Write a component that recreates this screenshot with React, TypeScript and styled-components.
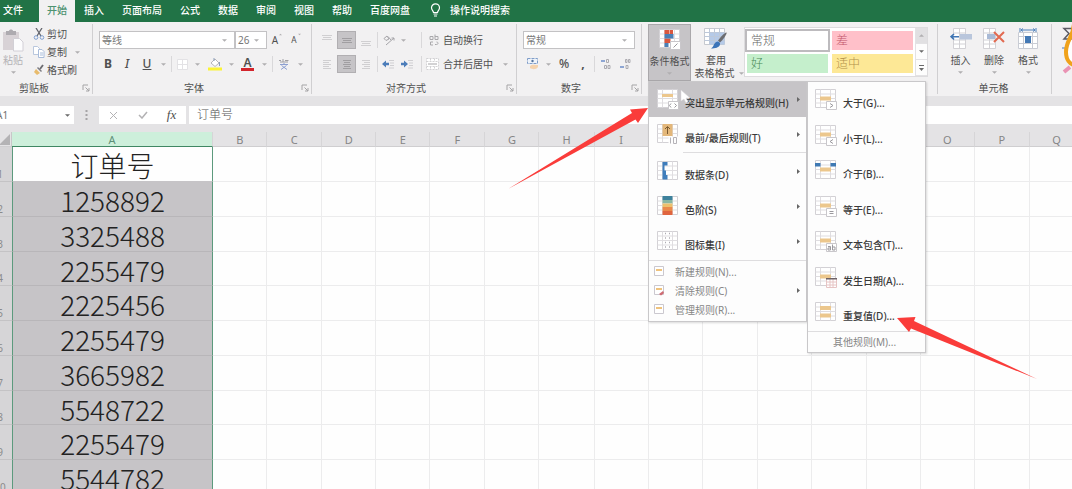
import React from 'react';
import styled, { createGlobalStyle, css } from 'styled-components';

const c = {
  green: '#217346',
  ribbon: '#f2f1f2',
  chrome: '#e4e3e5',
  pressed: '#c6c4c7',
  line: '#d0cfd1',
  text: '#505050',
};

const Global = createGlobalStyle`
  * { box-sizing: border-box; }
  body { margin: 0; background: #fefefe; }
  body, button, input, select {
    font-family: "Noto Sans", "Noto Sans CJK SC", sans-serif;
    font-size: 10px;
    line-height: 14px;
    color: ${c.text};
  }
  button { border: 0; padding: 0; background: none; }
  svg { display: block; flex: none; }
`;

const Page = styled.div`
  position: relative;
  height: 100vh;
  overflow: hidden;
  display: flex;
  flex-direction: column;
`;

/* ---------- tab strip ---------- */

const TabStrip = styled.nav`
  display: flex;
  height: 22px;
  flex: none;
  background: ${c.green};
`;

const Tab = styled.button<{ $active?: boolean; $file?: boolean }>`
  padding: 0 9px 3px;
  color: #fff;
  font-weight: 500;
  white-space: nowrap;
  ${p => p.$file && css`padding: 0 16px 3px 3px;`}
  ${p => p.$active && css`padding: 0 8px 3px; background: ${c.ribbon}; color: #4d9270;`}
`;

const TellMe = styled.button`
  display: flex;
  align-items: center;
  gap: 9px;
  margin-left: 11px;
  padding-bottom: 3px;
  color: #fff;
  font-weight: 500;
`;

/* ---------- ribbon ---------- */

const Ribbon = styled.div`
  display: flex;
  flex: none;
  height: 74px;
  background: ${c.ribbon};
`;

const Group = styled.section<{ $w?: number }>`
  display: flex;
  flex-direction: column;
  flex: ${p => (p.$w ? `0 0 ${p.$w}px` : '1 0 0')};
  min-width: 0;
  margin: 2px 0;
  border-right: ${p => (p.$w ? `1px solid ${c.line}` : '0')};
`;

const GroupBody = styled.div`
  flex: 1;
  display: flex;
  min-height: 0;
`;

const GroupFooter = styled.div<{ $shift?: number }>`
  display: flex;
  align-items: center;
  height: 12px;
  padding-right: 2px;
  text-align: center;
  span { flex: 1; padding-right: ${p => p.$shift || 0}px; line-height: 12px; }
`;

const LaunchButton = styled.button`
  width: 8px;
  height: 8px;
`;

const Rows = styled.div<{ $pad: number }>`
  flex: 1;
  display: flex;
  flex-direction: column;
  gap: 6px;
  padding: 7px 0 0 ${p => p.$pad}px;
`;

const ToolRow = styled.div`
  display: flex;
  align-items: center;
  height: 18px;
`;

const Tool = styled.button<{ $w: number; $on?: boolean }>`
  display: flex;
  align-items: center;
  justify-content: center;
  width: ${p => p.$w}px;
  height: 18px;
  white-space: nowrap;
  ${p => p.$on && css`background: ${c.pressed}; border: 1px solid #b1afb2;`}
`;

const SizeTool = styled(Tool)`
  align-items: flex-start;
  gap: 1px;
  padding-top: 2px;
`;

const LetterTool = styled(Tool)<{ $kind?: 'b' | 'i' | 'u' }>`
  font-size: 12px;
  font-weight: ${p => (p.$kind === 'b' ? 700 : 500)};
  font-style: ${p => (p.$kind === 'i' ? 'italic' : 'normal')};
  text-decoration: ${p => (p.$kind === 'u' ? 'underline' : 'none')};
`;

const FxButton = styled(Tool)`
  font-family: "Liberation Serif", serif;
  font-size: 13px;
  font-style: italic;
`;

const Divider = styled.i<{ $m?: number; $r?: number }>`
  width: 1px;
  height: 16px;
  margin: 0 ${p => p.$r ?? p.$m ?? 0}px 0 ${p => p.$m || 0}px;
  background: #d9d8da;
`;

const TextTool = styled.button`
  display: flex;
  align-items: center;
  gap: 4px;
  height: 18px;
  white-space: nowrap;
`;

const Combo = styled.label<{ $w: number }>`
  display: grid;
  grid-template-columns: 1fr 12px;
  align-items: center;
  width: ${p => p.$w}px;
  height: 18px;
  background: #fff;
  border: 1px solid #c3c2c4;
  & > select { grid-area: 1 / 1 / 2 / 3; }
  & > svg { grid-area: 1 / 2; pointer-events: none; }
`;

const Select = styled.select`
  appearance: none;
  width: 100%;
  height: 16px;
  padding: 0 2px;
  border: 0;
  background: transparent;
  color: #777;
`;

const Paste = styled.button`
  display: flex;
  flex-direction: column;
  align-items: center;
  width: 30px;
  padding: 5px 4px 0 0;
  color: #b5b3b6;
  svg + span { margin-top: 1px; }
  span + svg { margin-top: 4px; }
`;

const ClipActions = styled.div`
  display: flex;
  flex-direction: column;
  padding: 1px 0 0 3px;
  ${TextTool} { gap: 2px; }
`;

const BigButton = styled.button<{ $w: number; $on?: boolean }>`
  display: flex;
  flex-direction: column;
  align-items: center;
  width: ${p => p.$w}px;
  height: 57px;
  padding-top: 4px;
  line-height: 13px;
  white-space: nowrap;
  svg + span { margin-top: 4px; }
  span + svg { margin-top: 4px; }
  ${p => p.$on && css`background: ${c.pressed}; border: 1px solid #aaa8ab;`}
`;

const Inline = styled.span`
  display: flex;
  align-items: center;
  gap: 4px;
  padding-left: 6px;
`;

const StylesBody = styled(GroupBody)`
  padding-left: 6px;
  align-items: flex-start;
`;

const Gallery = styled.div`
  display: flex;
  margin: 3px 0 0 3px;
  background: #fff;
  border: 1px solid #dddcde;
`;

const Swatches = styled.div`
  display: grid;
  grid-template-columns: 85px 85px;
  grid-template-rows: 23px 23px;
  padding-top: 1px;
`;

const Swatch = styled.button<{ $bg: string; $fg: string; $sel?: boolean }>`
  margin: 2px;
  padding: 0 4px;
  text-align: left;
  font-size: 12px;
  font-weight: 300;
  background: ${p => p.$bg};
  color: ${p => p.$fg};
  ${p => p.$sel && css`margin: 0; border: 2px solid #bdbbbe;`}
`;

const GalleryScroll = styled.div`
  display: grid;
  grid-template-rows: repeat(3, 16px);
  width: 12px;
`;

const ScrollButton = styled.button<{ $off?: boolean }>`
  display: flex;
  align-items: center;
  justify-content: center;
  border-left: 1px solid #e3e2e4;
  border-bottom: 1px solid #e3e2e4;
  background: ${p => (p.$off ? '#e1e0e2' : '#fdfdfd')};
`;

/* ---------- conditional formatting menu ---------- */

const MenuAnchor = styled.div`
  position: relative;
`;

const Popup = styled.div`
  position: absolute;
  z-index: 5;
  top: 57px;
  left: 0;
  display: flex;
  align-items: flex-start;
`;

const Menu = styled.div<{ $w: number }>`
  width: ${p => p.$w}px;
  padding-bottom: 2px;
  background: #fdfdfd;
  border: 1px solid #c9c8ca;
  box-shadow: 1px 1px 2px rgba(0, 0, 0, 0.15);
`;

const MenuItem = styled.button<{ $on?: boolean }>`
  display: flex;
  align-items: center;
  width: 100%;
  height: 35px;
  padding: 0 6px 0 8px;
  gap: 6px;
  text-align: left;
  white-space: nowrap;
  font-weight: 500;
  color: #3a3a3a;
  background: ${p => (p.$on ? c.pressed : 'transparent')};
  span { flex: 1; padding-top: 6px; }
`;

const SmallItem = styled(MenuItem)`
  height: 19px;
  padding-left: 5px;
  gap: 10px;
  font-weight: 400;
  color: #868686;
  span { padding-top: 0; }
`;

const MoreItem = styled(SmallItem)`
  padding-left: 26px;
`;

const MenuRule = styled.hr<{ $inset?: boolean }>`
  height: 1px;
  margin: ${p => (p.$inset ? '0 0 1px 34px' : '1px 0')};
  border: 0;
  background: #dedddf;
`;

const Submenu = styled(Menu)`
  padding-bottom: 1px;
  ${MenuItem} { padding-left: 7px; gap: 6px; }
  ${MenuItem}:nth-child(odd) { height: 36px; }
  ${MoreItem}${MoreItem} { height: 19px; padding-left: 25px; }
  ${MenuRule} { margin: 0; }
`;

/* ---------- formula bar ---------- */

const FormulaBar = styled.div`
  display: flex;
  flex: none;
  height: 36px;
  padding: 10px 0 8px;
  background: ${c.chrome};
`;

const NameBox = styled.div`
  display: flex;
  align-items: center;
  width: 78px;
  margin-left: -4px;
  padding-right: 4px;
  background: #fff;
`;

const BarInput = styled.input`
  flex: 1;
  min-width: 0;
  border: 0;
  padding: 0;
  background: transparent;
  color: #707070;
`;

const Grip = styled.div`
  display: flex;
  align-items: center;
  justify-content: center;
  width: 25px;
`;

const EntryButtons = styled.div`
  display: flex;
  align-items: center;
  width: 87px;
  background: #fff;
`;

const FormulaInput = styled.input`
  flex: 1;
  min-width: 0;
  margin-left: 3px;
  padding: 0 8px;
  border: 0;
  background: #fff;
  font-size: 12px;
  font-weight: 300;
  color: #555;
`;

/* ---------- sheet ---------- */

const Sheet = styled.div`
  flex: 1;
  min-height: 0;
  overflow: hidden;
`;

const Grid = styled.table`
  width: calc(100% + 12px);
  min-width: 1096px;
  margin-left: -12px;
  border-collapse: separate;
  border-spacing: 0;
  table-layout: fixed;
`;

const ColHead = styled.th<{ $on?: boolean }>`
  height: 15px;
  padding: 1px 0 0;
  font-size: 11px;
  line-height: 13px;
  font-weight: 400;
  color: ${p => (p.$on ? '#5e8f78' : '#858585')};
  background: ${p => (p.$on ? '#cdefdb' : c.chrome)};
  border-right: 1px solid #d6d5d7;
  border-bottom: 1px solid ${p => (p.$on ? '#3f8763' : '#cfced0')};
`;

const Corner = styled(ColHead)`
  border-right-color: #c8c7c9;
  svg { margin-left: 11px; }
`;

const RowHead = styled.th`
  padding: 0 0 1px;
  vertical-align: bottom;
  text-align: center;
  font-weight: 400;
  line-height: 12px;
  color: #8b8b8b;
  background: #d6d5d7;
  border-bottom: 1px solid #c4c3c5;
`;

const Row = styled.tr`
  height: 35px;
  &:nth-child(4n) { height: 34px; }
`;

const Cell = styled.td`
  padding: 0;
  border-right: 1px solid #ececed;
  border-bottom: 1px solid #ececed;
`;

const KeyCell = styled.td<{ $head?: boolean }>`
  padding: 2px 0 0;
  text-align: center;
  font-family: "Noto Sans CJK SC", sans-serif;
  font-size: 28px;
  line-height: 30px;
  font-weight: 300;
  color: #222;
  background: ${p => (p.$head ? '#fefefe' : c.pressed)};
  border-left: 1px solid #5c9a7d;
  border-right: 1px solid #5c9a7d;
  border-bottom: 1px solid ${p => (p.$head ? c.pressed : '#b8b6b9')};
`;

const Annotations = styled.svg`
  position: absolute;
  z-index: 10;
  top: 0;
  left: 0;
  overflow: visible;
  pointer-events: none;
`;

/* ---------- icons ---------- */

const Caret = ({ up, dark, w = 5 }: { up?: boolean; dark?: boolean; w?: number }) => (
  <svg width={w} height="3" viewBox="0 0 6 3" aria-hidden="true">
    <path d={up ? 'M0 3 3 0 6 3Z' : 'M0 0h6L3 3Z'} fill={dark ? '#6a6a6a' : '#b0afb1'} />
  </svg>
);

const Launch = ({ label }: { label: string }) => (
  <LaunchButton aria-label={label}>
    <svg width="8" height="8" viewBox="0 0 8 8">
      <path d="M1 6V1h5M3.500 3.500 7 7M7 4v3H4" fill="none" stroke="#a5a4a6" />
    </svg>
  </LaunchButton>
);

const Sheetlet = ({ children, size = 22 }: { children?: React.ReactNode; size?: number }) => (
  <svg width={size} height={size} viewBox="0 0 22 22" aria-hidden="true">
    <path d="M.5.5h20v18H.5Z" fill="#fff" stroke="#d3d1d5" />
    <path d="M.5 5h20M.5 9.500h20M.5 14h20M5.500.5v18M15.500.5v18" stroke="#dfdde0" fill="none" />
    {children}
  </svg>
);

const Badge = ({ d }: { d: string }) => (
  <>
    <path d="M11.500 12.500h10v8h-10Z" fill="#fff" stroke="#c9c7cb" />
    <path d={d} fill="none" stroke="#9b999e" />
  </>
);

const orange = '#ecc78d';

const CondIcon = () => (
  <Sheetlet>
    <path d="M5.500 1h5v4h-5ZM5.500 9.500h6V14h-6Z" fill="#d9573f" />
    <path d="M5.500 5h9v4.500h-9Z" fill="#4b7fb5" />
    <path d="M5.500 14h4v4h-4Z" fill="#4b7fb5" />
    <path d="M11 1h3v4h-3Z" fill="#d9573f" />
    <Badge d="m14.500 18.500 4-4" />
  </Sheetlet>
);

const TableStyleIcon = () => (
  <svg width="24" height="22" viewBox="0 0 24 22" aria-hidden="true">
    <path d="M.5.500h20v16H.5Z" fill="#fff" stroke="#c6c9cf" />
    <path d="M5.500 4.500h15v12h-15Z" fill="#b5cae8" />
    <path d="M.5 4.500h20M.5 8.500h20M.5 12.500h20M5.500.5v16M10.500.5v16M15.500.5v16" stroke="#bcc8da" fill="none" />
    <path d="M22.500 4.500c1 1-4 8-6.500 10l-2-2c2-3 7.500-9 8.500-8Z" fill="#6c6c70" />
    <path d="M13.500 13.500c1.500 0 3 1.500 2.500 3-.5 3-5 4-9 4 3-1.500 2.500-6 6.500-7Z" fill="#3c74b8" />
  </svg>
);

const PasteIcon = () => (
  <svg width="22" height="23" viewBox="0 0 22 23" aria-hidden="true">
    <path d="M1 3h16v18H1Z" fill="#d8d2d6" />
    <path d="M4 2h3c0-2 4-2 4 0h3v4H4Z" fill="#aeabb0" />
    <path d="M11.500 9.500h6l3.500 3.500v9h-9.500Z" fill="#fcfcfd" stroke="#d2d0d6" />
  </svg>
);

const CutIcon = () => (
  <svg width="12" height="12" viewBox="0 0 12 12" aria-hidden="true">
    <path d="m3 0 5 8M9 0 4 8" stroke="#63656c" strokeWidth="1.300" fill="none" />
    <circle cx="3" cy="9.500" r="1.800" fill="none" stroke="#7f9fd0" />
    <circle cx="9" cy="9.500" r="1.800" fill="none" stroke="#7f9fd0" />
  </svg>
);

const CopyIcon = () => (
  <svg width="12" height="12" viewBox="0 0 12 12" aria-hidden="true">
    <path d="M.5.500h4l2 2v6h-6Z" fill="#fff" stroke="#b9c7dd" />
    <path d="M5.500 3.500h3.500l2 2v6H5.500ZM7 7h3M7 9h3" fill="#fff" stroke="#a9bcda" />
  </svg>
);

const BrushIcon = () => (
  <svg width="12" height="12" viewBox="0 0 12 12" aria-hidden="true">
    <path d="M3 5 7 9 4 11 1 8Z" fill="#e8bb6d" />
    <path d="m4 4 4 4 1-1-4-4Z" fill="#7d7d82" />
    <path d="m7 5 3-4" stroke="#6b6b70" strokeWidth="1.800" />
  </svg>
);

const BulbIcon = () => (
  <svg width="11" height="14" viewBox="0 0 11 14" aria-hidden="true">
    <path d="M3.500 9.500C3.500 8 1.500 7 1.500 4.800a4 4 0 0 1 8 0C9.500 7 7.500 8 7.500 9.500ZM3.500 11h4M4 13h3" fill="none" stroke="#fff" strokeWidth="1.200" />
  </svg>
);

const LinesIcon = ({ d, color = '#d0cfd1' }: { d: string; color?: string }) => (
  <svg width="10" height="13" viewBox="0 0 10 13" aria-hidden="true">
    <path d={d} stroke={color} fill="none" />
  </svg>
);

const BordersIcon = () => (
  <svg width="11" height="11" viewBox="0 0 11 11" aria-hidden="true">
    <path d="M.5.500h10v10H.5ZM5.500.5v10M.5 5.500h10" fill="#fff" stroke="#e3e2e5" />
  </svg>
);

const FillIcon = () => (
  <svg width="14" height="14" viewBox="0 0 14 14" aria-hidden="true">
    <path d="m3 6 4-4 4 4-4 3.500Z" fill="#fff" stroke="#b6b5b8" />
    <path d="M6 4V1M11.500 5v4" stroke="#8da0bd" />
    <path d="M0 10.500h14v3H0Z" fill="#fbf335" />
  </svg>
);

const ColorBar = styled.span`
  width: 13px;
  border-bottom: 3px solid #d3242c;
  font-size: 12px;
  line-height: 11px;
  font-weight: 600;
  text-align: center;
`;

const PhoneticIcon = () => (
  <svg width="10" height="12" viewBox="0 0 10 12" aria-hidden="true">
    <path d="M0 2.500h2M4 1v3M6 2.500h3.500M1 4h8" stroke="#a09fa4" fill="none" />
    <path d="M1 6.500h8M5 5v1M2.500 7.500 8 11.500M7.500 7.500 2 11.500" stroke="#8d9fd0" fill="none" />
  </svg>
);

const RotateIcon = () => (
  <svg width="12" height="12" viewBox="0 0 12 12" aria-hidden="true">
    <path d="M1 4.500 4 2l2 3-3 1.500ZM5 2.500 8 6M3 11 11 4M8.500 4H11v2.500" stroke="#a5a4a8" fill="none" />
  </svg>
);

const IndentIcon = ({ out }: { out?: boolean }) => (
  <svg width="12" height="11" viewBox="0 0 12 11" aria-hidden="true">
    <path d="M7 1.500h5M8 4h4M8 6.500h4M7 9h5" stroke="#d0cfd2" />
    <path d={out ? 'M0 5 4 1.500v2.300h3v2.400H4v2.300Z' : 'M7 5 3 1.500v2.300H0v2.400h3v2.300Z'} fill="#4c7dba" />
  </svg>
);

const WrapIcon = () => (
  <svg width="10" height="12" viewBox="0 0 10 12" aria-hidden="true">
    <path d="M1 2.500h3v3H1ZM6 .5v5h3v-3H6M4 8H1.500v3H4M6 10.500h1.500c2 0 2-2.500 0-2.500" stroke="#a9a8ab" fill="none" />
  </svg>
);

const MergeIcon = () => (
  <svg width="13" height="12" viewBox="0 0 13 12" aria-hidden="true">
    <path d="M.5.500h12v11H.5ZM.5 3.500h12M.5 8.500h12M4.500.5v3M8.500.5v3M4.500 8.500v3M8.500 8.500v3" fill="#fff" stroke="#d3d2d4" strokeDasharray="2 1" />
    <path d="M2 6h9" stroke="#a6a5a8" />
  </svg>
);

const CurrencyIcon = () => (
  <svg width="12" height="12" viewBox="0 0 12 12" aria-hidden="true">
    <path d="M.5.500h10v5H.5Z" fill="#eef3fa" stroke="#7f9dc9" strokeDasharray="3 1" />
    <circle cx="5.500" cy="3" r="1.200" fill="#55759f" />
    <path d="M3 8c2-2 6-1 8-1v2c-2 3-6 2.500-8 1Z" fill="#f5d3ae" />
  </svg>
);

const DecimalIcon = ({ less }: { less?: boolean }) => (
  <svg width="11" height="12" viewBox="0 0 11 12" aria-hidden="true">
    <path d={less ? 'M5.500 1.500h1.500v3H5.500ZM8.500 1.500h1.500v3H8.500ZM6 7.500h2v3H6Z' : 'M5.500 1.500h2v3h-2ZM3.500 7.500h2v3h-2ZM7 7.500h2v3H7Z'} stroke="#acabb0" fill="none" />
    <path d={less ? 'M0 9h4' : 'M0 3h4'} stroke="#6c8cc9" strokeWidth="1.500" />
  </svg>
);

const InsertIcon = () => (
  <svg width="22" height="22" viewBox="0 0 22 22" aria-hidden="true">
    <path d="M3.500.5h12v20h-12ZM3.500 5h12M3.500 12h12M3.500 16h12M9.500.5v20" fill="#fff" stroke="#d2d1d5" />
    <path d="M10 6h12v5.500H10Z" fill="#b9c6dc" />
    <path d="M1 8.700h8M4 6 1 8.700 4 11.500" stroke="#3f75b4" strokeWidth="1.600" fill="none" />
  </svg>
);

const DeleteIcon = () => (
  <svg width="22" height="22" viewBox="0 0 22 22" aria-hidden="true">
    <path d="M.5.500h12v20H.5ZM.5 5h12M.5 12h12M.5 16h12M6.500.5v20" fill="#fff" stroke="#d2d1d5" />
    <path d="M4 6h8v5H4Z" fill="#a9bad6" />
    <path d="m11 4 10 10M21 4 11 14" stroke="#e26a50" strokeWidth="2" />
  </svg>
);

const FormatIcon = () => (
  <svg width="20" height="22" viewBox="0 0 20 22" aria-hidden="true">
    <path d="M.5 4.500h19v16H.5ZM.5 8.500h19M.5 15.500h19M5.500 4.500v16M14.500 4.500v16" fill="#fff" stroke="#c9ccd4" />
    <path d="M7 8h6v7H7Z" fill="#4479b5" />
    <path d="M3 2h14M5 .5 3 2l2 1.500M15 .5 17 2l-2 1.500M2 0v4M18 0v4" stroke="#4d80bb" fill="none" />
  </svg>
);

const EditingArt = () => (
  <svg width="12" height="70" viewBox="1060 24 12 70" aria-hidden="true">
    <path d="M1073 28.500h-9l5 5-5 5.500h9" fill="none" stroke="#5b5b66" strokeWidth="1.500" />
    <path d="M1062 48h4" stroke="#7fa0cf" strokeWidth="1.500" />
    <path d="m1064 72 6-5" stroke="#ea93b4" strokeWidth="4" />
    <path d="M1074 38c-10 5-11 22 0 27Z" fill="#fff" />
    <path d="M1074 24c-1 14-8 16-8 28 0 8 4 12 8 13" fill="none" stroke="#f0a21b" strokeWidth="4" />
  </svg>
);

const TopBottomIcon = () => (
  <Sheetlet>
    <path d="M5.500 0h10v12h-10Z" fill="#e3b77a" />
    <path d="M10.500 10V3M8 5l2.500-2.500L13 5" stroke="#7a5a30" fill="none" />
    <path d="M11.500 12.500h10v8h-10Z" fill="#fdfdfd" />
    <path d="M13.500 13.500v6M16.500 13.500h3v6h-3Z" fill="none" stroke="#b5b3b8" />
  </Sheetlet>
);

const BarsIcon = () => (
  <Sheetlet>
    <path d="M5.500 1h5v3.500h-5ZM5.500 4.500h2v5h-2ZM5.500 9.500h3.500V14H5.500ZM5.500 14h5v4.500h-5Z" fill="#3f7dbb" />
  </Sheetlet>
);

const ScaleIcon = () => (
  <Sheetlet>
    <path d="M5.500 0h10v4h-10Z" fill="#3e829c" />
    <path d="M5.500 4h10v3.500h-10Z" fill="#89b6a2" />
    <path d="M5.500 7.500h10V11h-10Z" fill="#edc06c" />
    <path d="M5.500 11h10v4h-10Z" fill="#ea8a4a" />
    <path d="M5.500 15h10v4h-10Z" fill="#e0653f" />
  </Sheetlet>
);

const SetIcon = () => (
  <Sheetlet>
    <path d="M8 2.500h1M12 2.500h1M8 7h1M12 7h1M8 11.500h1M12 11.500h1M8 16h1M12 16h1" stroke="#aeacb2" strokeWidth="1.500" />
  </Sheetlet>
);

const MiniRuleIcon = ({ clear }: { clear?: boolean }) => (
  <svg width="11" height="11" viewBox="0 0 11 11" aria-hidden="true">
    <path d="M.5.500h9v9h-9Z" fill="#fff" stroke="#cbc8cf" />
    <path d="M2 3h6v2H2Z" fill="#efc27c" />
    {clear && <path d="m5 9 4-3 1 2-3 2.500Z" fill="#cf6a72" />}
  </svg>
);

const SubIcon = ({ kind }: { kind: string }) => {
  const badges: Record<string, string> = {
    gt: 'm15 14.500 3 2-3 2',
    lt: 'm18 14.500-3 2 3 2',
    eq: 'M14.500 15.500h4M14.500 17.500h4',
    text: 'M13 15.500h2.500v3.500H13v-2h2.500M17.500 13.500V19H20v-3h-2.500',
  };
  return (
    <Sheetlet>
      {kind === 'dup' ? (
        <path d="M5 4h11v4H5ZM5 11.500h11v4H5Z" fill={orange} />
      ) : (
        <path d="M5 7.500h11v4H5Z" fill={orange} />
      )}
      {kind === 'between' && <path d="M0 3h5.500v3.500H0ZM15.500 3H21v3.500h-5.500Z" fill="#3f79b3" />}
      {kind === 'date' && (
        <>
          <path d="M11.500 11.500h10v9h-10ZM11.500 15h10M11.500 18h10M15 12v9M18 12v9" fill="#fff" stroke="#e6c4c4" />
          <path d="M11 11h11v1.500H11Z" fill="#6d6267" />
        </>
      )}
      {badges[kind] && <Badge d={badges[kind]} />}
    </Sheetlet>
  );
};

const HighlightIcon = () => (
  <Sheetlet>
    <path d="M5 5h11v3H5Z" fill={orange} />
    <Badge d="m14 14.500-1.500 2 1.500 2M17.500 14.500l2 2-2 2" />
  </Sheetlet>
);

const MenuArrow = () => (
  <svg width="3" height="5" viewBox="0 0 3 5" aria-hidden="true">
    <path d="M0 0v5l3-2.500Z" fill="#666" />
  </svg>
);

/* ---------- data ---------- */

const tabs = ['文件', '开始', '插入', '页面布局', '公式', '数据', '审阅', '视图', '帮助', '百度网盘'];

const rules = [
  { label: '突出显示单元格规则(H)', icon: <HighlightIcon />, on: true },
  { label: '最前/最后规则(T)', icon: <TopBottomIcon />, rule: true },
  { label: '数据条(D)', icon: <BarsIcon /> },
  { label: '色阶(S)', icon: <ScaleIcon /> },
  { label: '图标集(I)', icon: <SetIcon /> },
];

const highlight = [
  ['gt', '大于(G)...'],
  ['lt', '小于(L)...'],
  ['between', '介于(B)...'],
  ['eq', '等于(E)...'],
  ['text', '文本包含(T)...'],
  ['date', '发生日期(A)...'],
  ['dup', '重复值(D)...'],
];

const columns = 'BCDEFGHIJKLMNOPQ'.split('');
const orders = ['订单号', '1258892', '3325488', '2255479', '2225456', '2255479', '3665982', '5548722', '2255479', '5544782'];

/* ---------- ribbon groups ---------- */

const ClipboardGroup = () => (
  <Group $w={93}>
    <GroupBody>
      <Paste>
        <PasteIcon />
        <span>粘贴</span>
        <Caret />
      </Paste>
      <ClipActions>
        <TextTool><CutIcon /><span>剪切</span></TextTool>
        <TextTool><CopyIcon /><span>复制</span><Inline><Caret /></Inline></TextTool>
        <TextTool><BrushIcon /><span>格式刷</span></TextTool>
      </ClipActions>
    </GroupBody>
    <GroupFooter $shift={14}><span>剪贴板</span><Launch label="剪贴板选项" /></GroupFooter>
  </Group>
);

const FontGroup = () => (
  <Group $w={219}>
    <GroupBody>
      <Rows $pad={6}>
        <ToolRow>
          <Combo $w={136}><Select aria-label="字体"><option>等线</option></Select><Caret /></Combo>
          <Combo $w={32}><Select aria-label="字号"><option>26</option></Select><Caret /></Combo>
          <SizeTool $w={20} aria-label="增大字号">A<Caret up w={3} /></SizeTool>
          <SizeTool $w={18} aria-label="减小字号"><small>A</small><Caret w={3} /></SizeTool>
        </ToolRow>
        <ToolRow>
          <LetterTool $w={18} $kind="b">B</LetterTool>
          <LetterTool $w={20} $kind="i">I</LetterTool>
          <LetterTool $w={20} $kind="u">U</LetterTool>
          <Tool $w={12} aria-label="下划线选项"><Caret /></Tool>
          <Divider $m={2} />
          <Tool $w={16} aria-label="边框"><BordersIcon /></Tool>
          <Tool $w={15} aria-label="边框选项"><Caret /></Tool>
          <Tool $w={20} aria-label="填充颜色"><FillIcon /></Tool>
          <Tool $w={13} aria-label="填充颜色选项"><Caret /></Tool>
          <Tool $w={19} aria-label="字体颜色"><ColorBar>A</ColorBar></Tool>
          <Tool $w={14} aria-label="字体颜色选项"><Caret /></Tool>
          <Divider $m={1} />
          <Tool $w={20} aria-label="拼音"><PhoneticIcon /></Tool>
          <Tool $w={12} aria-label="拼音选项"><Caret /></Tool>
        </ToolRow>
      </Rows>
    </GroupBody>
    <GroupFooter $shift={6}><span>字体</span><Launch label="字体设置" /></GroupFooter>
  </Group>
);

const AlignGroup = () => (
  <Group $w={205}>
    <GroupBody>
      <Rows $pad={5}>
        <ToolRow>
          <Tool $w={20} aria-label="顶端对齐"><LinesIcon d="M0 1.500h10M1 3.500h8M0 5.500h10" /></Tool>
          <Tool $w={19} $on aria-label="垂直居中"><LinesIcon d="M0 4.500h10M1 6.500h8M0 8.500h10" color="#a09ea1" /></Tool>
          <Tool $w={20} aria-label="底端对齐"><LinesIcon d="M0 7.500h10M1 9.500h8M0 11.500h10" /></Tool>
          <Divider $m={1} />
          <Tool $w={20} aria-label="方向"><RotateIcon /></Tool>
          <Tool $w={8} aria-label="方向选项"><Caret /></Tool>
          <Divider $m={14} $r={7} />
          <TextTool><WrapIcon /><span>自动换行</span></TextTool>
        </ToolRow>
        <ToolRow>
          <Tool $w={20} aria-label="左对齐"><LinesIcon d="M1 2.500h8M1 4.500h6M1 6.500h8M1 8.500h6M1 10.500h8" /></Tool>
          <Tool $w={19} $on aria-label="居中"><LinesIcon d="M1 2.500h8M2 4.500h6M1 6.500h8M2 8.500h6M1 10.500h8" color="#a09ea1" /></Tool>
          <Tool $w={20} aria-label="右对齐"><LinesIcon d="M1 2.500h8M3 4.500h6M1 6.500h8M3 8.500h6M1 10.500h8" /></Tool>
          <Divider $m={1} />
          <Tool $w={18} aria-label="减少缩进量"><IndentIcon out /></Tool>
          <Tool $w={20} aria-label="增加缩进量"><IndentIcon /></Tool>
          <Divider $m={4} />
          <TextTool><MergeIcon /><span>合并后居中</span><Inline><Caret /></Inline></TextTool>
        </ToolRow>
      </Rows>
    </GroupBody>
    <GroupFooter $shift={6}><span>对齐方式</span><Launch label="对齐设置" /></GroupFooter>
  </Group>
);

const NumberGroup = () => (
  <Group $w={125}>
    <GroupBody>
      <Rows $pad={6}>
        <ToolRow>
          <Combo $w={112}><Select aria-label="数字格式"><option>常规</option></Select><Caret /></Combo>
        </ToolRow>
        <ToolRow>
          <Tool $w={19} aria-label="会计数字格式"><CurrencyIcon /></Tool>
          <Tool $w={12} aria-label="会计格式选项"><Caret /></Tool>
          <LetterTool $w={20}>%</LetterTool>
          <LetterTool $w={18} $kind="b">,</LetterTool>
          <Divider $m={2} />
          <Tool $w={18} aria-label="增加小数位数"><DecimalIcon /></Tool>
          <Tool $w={20} aria-label="减少小数位数"><DecimalIcon less /></Tool>
        </ToolRow>
      </Rows>
    </GroupBody>
    <GroupFooter $shift={6}><span>数字</span><Launch label="数字设置" /></GroupFooter>
  </Group>
);

const ConditionalMenu = () => (
  <Popup>
    <Menu $w={159} role="menu">
      {rules.map(r => (
        <React.Fragment key={r.label}>
          <MenuItem $on={r.on} role="menuitem">{r.icon}<span>{r.label}</span><MenuArrow /></MenuItem>
          {r.rule && <MenuRule $inset />}
        </React.Fragment>
      ))}
      <MenuRule />
      <SmallItem role="menuitem"><MiniRuleIcon /><span>新建规则(N)...</span></SmallItem>
      <SmallItem role="menuitem"><MiniRuleIcon clear /><span>清除规则(C)</span><MenuArrow /></SmallItem>
      <SmallItem role="menuitem"><MiniRuleIcon /><span>管理规则(R)...</span></SmallItem>
    </Menu>
    <Submenu $w={119} role="menu">
      {highlight.map(([kind, label]) => (
        <MenuItem key={kind} role="menuitem"><SubIcon kind={kind} /><span>{label}</span></MenuItem>
      ))}
      <MenuRule />
      <MoreItem role="menuitem"><span>其他规则(M)...</span></MoreItem>
    </Submenu>
  </Popup>
);

const StylesGroup = () => (
  <Group $w={296}>
    <StylesBody>
      <MenuAnchor>
        <BigButton $w={43} $on aria-haspopup="menu" aria-expanded="true">
          <CondIcon />
          <span>条件格式</span>
          <Caret />
        </BigButton>
        <ConditionalMenu />
      </MenuAnchor>
      <BigButton $w={50}>
        <TableStyleIcon />
        <span>套用</span>
        <Inline>表格格式<Caret /></Inline>
      </BigButton>
      <Gallery>
        <Swatches>
          <Swatch $bg="#fff" $fg="#666" $sel>常规</Swatch>
          <Swatch $bg="#ffc0c9" $fg="#c0566a">差</Swatch>
          <Swatch $bg="#c5efcc" $fg="#4a8a58">好</Swatch>
          <Swatch $bg="#fde896" $fg="#b3914a">适中</Swatch>
        </Swatches>
        <GalleryScroll>
          <ScrollButton $off aria-label="上一行"><Caret up /></ScrollButton>
          <ScrollButton aria-label="下一行"><Caret dark /></ScrollButton>
          <ScrollButton aria-label="其他样式">
            <svg width="5" height="6" viewBox="0 0 5 6"><path d="M0 .5h5" stroke="#6a6a6a" /><path d="M0 3h5L2.500 6Z" fill="#6a6a6a" /></svg>
          </ScrollButton>
        </GalleryScroll>
      </Gallery>
    </StylesBody>
  </Group>
);

const CellsBody = styled(GroupBody)`
  padding-left: 6px;
`;

const CellsGroup = () => (
  <Group $w={114}>
    <CellsBody>
      <BigButton $w={33}><InsertIcon /><span>插入</span><Caret /></BigButton>
      <BigButton $w={34}><DeleteIcon /><span>删除</span><Caret /></BigButton>
      <BigButton $w={34}><FormatIcon /><span>格式</span><Caret /></BigButton>
    </CellsBody>
    <GroupFooter><span>单元格</span></GroupFooter>
  </Group>
);

const EditingBody = styled(GroupBody)`
  padding-left: 8px;
  overflow: hidden;
`;

export default function App() {
  return (
    <Page>
      <Global />
      <TabStrip>
        {tabs.map((t, i) => (
          <Tab key={t} $file={i === 0} $active={i === 1}>{t}</Tab>
        ))}
        <TellMe><BulbIcon /><span>操作说明搜索</span></TellMe>
      </TabStrip>

      <Ribbon>
        <ClipboardGroup />
        <FontGroup />
        <AlignGroup />
        <NumberGroup />
        <StylesGroup />
        <CellsGroup />
        <Group>
          <EditingBody><EditingArt /></EditingBody>
        </Group>
      </Ribbon>

      <FormulaBar>
        <NameBox><BarInput aria-label="名称框" defaultValue="A1" /><Caret dark /></NameBox>
        <Grip>
          <svg width="3" height="10" viewBox="0 0 3 10"><path d="M1.500 0v10" stroke="#a5a4a6" strokeWidth="2" strokeDasharray="2 2" /></svg>
        </Grip>
        <EntryButtons>
          <Tool $w={29} aria-label="取消">
            <svg width="9" height="9" viewBox="0 0 9 9"><path d="m1 1 7 7M8 1 1 8" stroke="#b3b2b4" /></svg>
          </Tool>
          <Tool $w={29} aria-label="输入">
            <svg width="10" height="8" viewBox="0 0 10 8"><path d="m1 4 3 3 5-6" fill="none" stroke="#b3b2b4" strokeWidth="1.500" /></svg>
          </Tool>
          <FxButton $w={29}>fx</FxButton>
        </EntryButtons>
        <FormulaInput aria-label="编辑栏" defaultValue="订单号" />
      </FormulaBar>

      <Sheet>
        <Grid>
          <colgroup>
            <col style={{ width: 24 }} />
            <col style={{ width: 201 }} />
            {columns.map((k, i) => <col key={k} style={{ width: i % 5 === 1 || i % 5 === 4 ? 55 : 54 }} />)}
          </colgroup>
          <thead>
            <tr>
              <Corner aria-label="全选">
                <svg width="11" height="11" viewBox="0 0 11 11"><path d="M11 0v11H0Z" fill="#b4b3b5" /></svg>
              </Corner>
              <ColHead $on>A</ColHead>
              {columns.map(k => <ColHead key={k}>{k}</ColHead>)}
            </tr>
          </thead>
          <tbody>
            {orders.map((o, i) => (
              <Row key={i}>
                <RowHead>{i + 1}</RowHead>
                <KeyCell $head={i === 0}>{o}</KeyCell>
                {columns.map(k => <Cell key={k} />)}
              </Row>
            ))}
          </tbody>
        </Grid>
      </Sheet>

      <Annotations width="1" height="1" aria-hidden="true">
        <path d="M507 189.500 632 113 630 109.500 648 108 638 123 635.500 119.500Z" fill="#fa3c3a" />
        <path d="M1037 379 911 328.500 909 332 897 318 915.500 317 914 321Z" fill="#fa3c3a" />
        <path d="M681 90v11l3-2 2 4 2-1-2-4h4Z" fill="#fff" stroke="#d8d7d9" strokeWidth="0.500" />
      </Annotations>
    </Page>
  );
}
